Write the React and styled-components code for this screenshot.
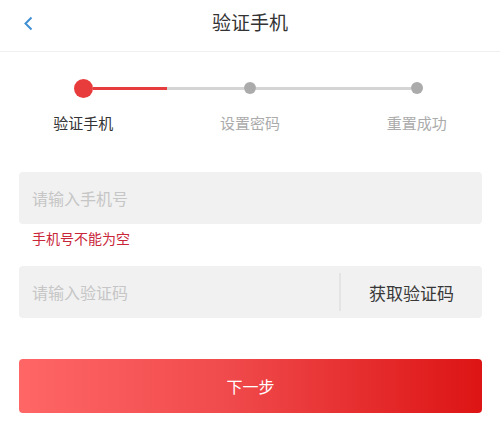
import React from "react";
import styled, { createGlobalStyle } from "styled-components";

const GlobalStyle = createGlobalStyle`
  body {
    margin: 0;
    background: #fff;
    font-family: "Noto Sans CJK SC", "Noto Sans", sans-serif;
  }
  input::placeholder {
    color: #c6c6c6;
  }
`;

const Page = styled.div`
  width: 500px;
  min-height: 439px;
  background: #fff;
`;

const Header = styled.header`
  position: relative;
  height: 51px;
  border-bottom: 1px solid #efefef;
  display: flex;
  align-items: center;
  justify-content: center;
`;

const Back = styled.button`
  position: absolute;
  left: 17px;
  top: 12px;
  width: 22px;
  height: 22px;
  padding: 0;
  border: 0;
  background: none;
  display: flex;
  align-items: center;
  justify-content: center;
`;

const Title = styled.h1`
  margin: 0;
  margin-top: -8px;
  font-size: 19px;
  font-weight: 400;
  color: #333;
`;

const Steps = styled.div`
  display: grid;
  grid-template-columns: repeat(3, 1fr);
  margin-top: 26px;
`;

const Step = styled.div`
  display: flex;
  flex-direction: column;
  align-items: center;
`;

const Track = styled.div`
  width: 100%;
  height: 20px;
  display: flex;
  align-items: center;
`;

const Line = styled.span`
  flex: 1;
  height: 3px;
  background: ${p => (p.$hidden ? "transparent" : p.$active ? "#e53d3d" : "#d4d4d4")};
`;

const Dot = styled.span`
  flex: none;
  width: ${p => (p.$active ? 19 : 12)}px;
  height: ${p => (p.$active ? 19 : 12)}px;
  border-radius: 50%;
  background: ${p => (p.$active ? "#e83b3b" : "#ababab")};
`;

const StepLabel = styled.span`
  margin-top: 15px;
  font-size: 15px;
  line-height: 20px;
  color: ${p => (p.$active ? "#333" : "#ababab")};
`;

const Form = styled.form`
  padding: 39px 18px 0 19px;
  display: flex;
  flex-direction: column;
`;

const Field = styled.div`
  height: 52px;
  border-radius: 4px;
  background: #f1f1f1;
  display: flex;
  align-items: center;
  margin-top: ${p => p.$gap || 0}px;
`;

const Input = styled.input`
  flex: 1;
  min-width: 0;
  height: 100%;
  padding: 0 13px;
  border: 0;
  background: transparent;
  outline: none;
  font-family: inherit;
  font-size: 16px;
  color: #333;
`;

const CodeButton = styled.button`
  flex: none;
  width: 143px;
  height: 38px;
  padding: 0;
  border: 0;
  border-left: 2px solid #e4e4e4;
  background: transparent;
  font-family: inherit;
  font-size: 17px;
  color: #383838;
`;

const Error = styled.p`
  margin: 4px 0 0 13px;
  font-size: 14px;
  line-height: 20px;
  color: #c9263a;
`;

const Submit = styled.button`
  margin-top: 41px;
  height: 54px;
  border: 0;
  border-radius: 4px;
  background: linear-gradient(90deg, #ff6666 0%, #f04a4c 45%, #dd1414 100%);
  font-family: inherit;
  font-size: 16px;
  color: #fff;
`;

const steps = [
  { label: "验证手机", active: true },
  { label: "设置密码" },
  { label: "重置成功" },
];

const App = () => {
  return (
    <Page>
      <GlobalStyle />
      <Header>
        <Back type="button" aria-label="返回">
          <svg width="10" height="15" viewBox="0 0 10 15">
            <path d="M8.5 1.5 L2.5 7.5 L8.5 13.5" fill="none" stroke="#3f8fd4" strokeWidth="2" />
          </svg>
        </Back>
        <Title>验证手机</Title>
      </Header>

      <Steps>
        {steps.map((s, i) => (
          <Step key={s.label}>
            <Track>
              <Line $hidden={i === 0} />
              <Dot $active={s.active} />
              <Line $hidden={i === steps.length - 1} $active={s.active} />
            </Track>
            <StepLabel $active={s.active}>{s.label}</StepLabel>
          </Step>
        ))}
      </Steps>

      <Form onSubmit={e => e.preventDefault()}>
        <Field>
          <Input placeholder="请输入手机号" />
        </Field>
        <Error>手机号不能为空</Error>
        <Field $gap={18}>
          <Input placeholder="请输入验证码" />
          <CodeButton type="button">获取验证码</CodeButton>
        </Field>
        <Submit type="submit">下一步</Submit>
      </Form>
    </Page>
  );
};

export default App;
